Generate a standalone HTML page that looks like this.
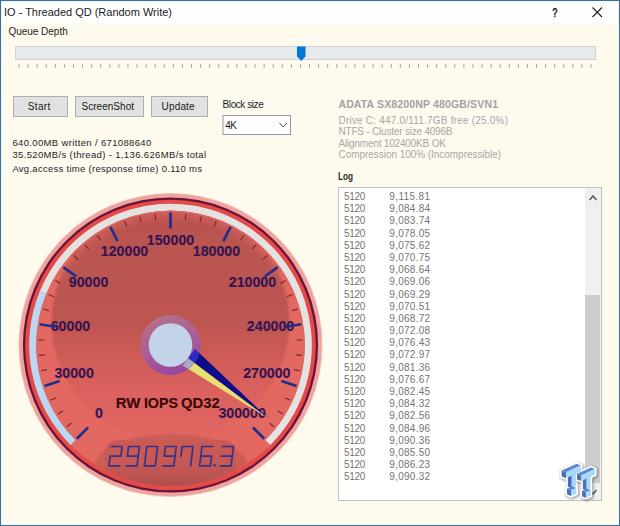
<!DOCTYPE html><html><head><meta charset="utf-8"><style>html,body{margin:0;padding:0;width:620px;height:526px;overflow:hidden;background:#fefaee}svg{display:block}text{font-family:"Liberation Sans",sans-serif}</style></head><body>
<svg width="620" height="526" viewBox="0 0 620 526">
<defs><linearGradient id="hubring" x1="0.3" y1="0" x2="0.6" y2="1"><stop offset="0" stop-color="#b4728a"/><stop offset="0.5" stop-color="#a660a0"/><stop offset="1" stop-color="#9044a8"/></linearGradient><linearGradient id="disp" x1="0" y1="0" x2="0" y2="1"><stop offset="0" stop-color="#c95a55"/><stop offset="0.5" stop-color="#c65954"/><stop offset="0.8" stop-color="#bb5451"/><stop offset="1" stop-color="#b04e4c"/></linearGradient><linearGradient id="darkgrad" x1="0" y1="0" x2="0" y2="1"><stop offset="0" stop-color="#b95350"/><stop offset="0.5" stop-color="#bd5651"/><stop offset="0.62" stop-color="#cc5a56"/><stop offset="0.8" stop-color="#db625e"/><stop offset="1" stop-color="#e36662"/></linearGradient><radialGradient id="bezelglow" cx="170.5" cy="345" r="134.2" gradientUnits="userSpaceOnUse"><stop offset="0.92" stop-color="#e36862" stop-opacity="0"/><stop offset="1" stop-color="#e36862" stop-opacity="0.55"/></radialGradient><filter id="blur1" x="-10%" y="-10%" width="120%" height="120%"><feGaussianBlur stdDeviation="0.5"/></filter><filter id="blur1b" x="-10%" y="-10%" width="120%" height="120%"><feGaussianBlur stdDeviation="1.2"/></filter><filter id="blur2" x="-10%" y="-10%" width="120%" height="120%"><feGaussianBlur stdDeviation="2"/></filter><filter id="blur3" x="-20%" y="-20%" width="140%" height="140%"><feGaussianBlur stdDeviation="3"/></filter><filter id="blurlogo" x="-30%" y="-30%" width="160%" height="160%"><feGaussianBlur stdDeviation="14"/></filter><clipPath id="dialclip2"><circle cx="170.5" cy="345.0" r="141.3"/></clipPath><clipPath id="dialclip"><circle cx="170.5" cy="345.0" r="134.2"/></clipPath></defs>
<rect x="0" y="0" width="620" height="526" fill="#fefaee"/>
<rect x="0" y="0" width="620" height="23" fill="#ffffff"/>
<rect x="1.5" y="1.5" width="617" height="523" fill="none" stroke="#eafbfd" stroke-width="1"/>
<rect x="0.5" y="0.5" width="619" height="525" fill="none" stroke="#3b6d9a" stroke-width="1"/>
<text x="4" y="16" font-size="11" fill="#1b1b1b" textLength="168" lengthAdjust="spacing">IO - Threaded QD (Random Write)</text>
<text x="552.6" y="17" font-size="12" fill="#1e1e1e" stroke="#1e1e1e" stroke-width="0.6" textLength="4.8" lengthAdjust="spacingAndGlyphs">?</text>
<path d="M592.5,7.5 L602,17 M602,7.5 L592.5,17" stroke="#222" stroke-width="1.1"/>
<text x="8.4" y="35.2" font-size="10" fill="#1e1e1e" textLength="59.3" lengthAdjust="spacing">Queue Depth</text>
<rect x="15.5" y="46.5" width="580" height="13" fill="#e7eaea" stroke="#d3d3d3" stroke-width="1"/>
<rect x="18.50" y="64.2" width="1" height="3.4" fill="#9c9c9c"/>
<rect x="27.58" y="64.2" width="1" height="3.4" fill="#9c9c9c"/>
<rect x="36.66" y="64.2" width="1" height="3.4" fill="#9c9c9c"/>
<rect x="45.74" y="64.2" width="1" height="3.4" fill="#9c9c9c"/>
<rect x="54.82" y="64.2" width="1" height="3.4" fill="#9c9c9c"/>
<rect x="63.90" y="64.2" width="1" height="3.4" fill="#9c9c9c"/>
<rect x="72.98" y="64.2" width="1" height="3.4" fill="#9c9c9c"/>
<rect x="82.06" y="64.2" width="1" height="3.4" fill="#9c9c9c"/>
<rect x="91.13" y="64.2" width="1" height="3.4" fill="#9c9c9c"/>
<rect x="100.21" y="64.2" width="1" height="3.4" fill="#9c9c9c"/>
<rect x="109.29" y="64.2" width="1" height="3.4" fill="#9c9c9c"/>
<rect x="118.37" y="64.2" width="1" height="3.4" fill="#9c9c9c"/>
<rect x="127.45" y="64.2" width="1" height="3.4" fill="#9c9c9c"/>
<rect x="136.53" y="64.2" width="1" height="3.4" fill="#9c9c9c"/>
<rect x="145.61" y="64.2" width="1" height="3.4" fill="#9c9c9c"/>
<rect x="154.69" y="64.2" width="1" height="3.4" fill="#9c9c9c"/>
<rect x="163.77" y="64.2" width="1" height="3.4" fill="#9c9c9c"/>
<rect x="172.85" y="64.2" width="1" height="3.4" fill="#9c9c9c"/>
<rect x="181.93" y="64.2" width="1" height="3.4" fill="#9c9c9c"/>
<rect x="191.01" y="64.2" width="1" height="3.4" fill="#9c9c9c"/>
<rect x="200.09" y="64.2" width="1" height="3.4" fill="#9c9c9c"/>
<rect x="209.17" y="64.2" width="1" height="3.4" fill="#9c9c9c"/>
<rect x="218.25" y="64.2" width="1" height="3.4" fill="#9c9c9c"/>
<rect x="227.33" y="64.2" width="1" height="3.4" fill="#9c9c9c"/>
<rect x="236.40" y="64.2" width="1" height="3.4" fill="#9c9c9c"/>
<rect x="245.48" y="64.2" width="1" height="3.4" fill="#9c9c9c"/>
<rect x="254.56" y="64.2" width="1" height="3.4" fill="#9c9c9c"/>
<rect x="263.64" y="64.2" width="1" height="3.4" fill="#9c9c9c"/>
<rect x="272.72" y="64.2" width="1" height="3.4" fill="#9c9c9c"/>
<rect x="281.80" y="64.2" width="1" height="3.4" fill="#9c9c9c"/>
<rect x="290.88" y="64.2" width="1" height="3.4" fill="#9c9c9c"/>
<rect x="299.96" y="64.2" width="1" height="3.4" fill="#9c9c9c"/>
<rect x="309.04" y="64.2" width="1" height="3.4" fill="#9c9c9c"/>
<rect x="318.12" y="64.2" width="1" height="3.4" fill="#9c9c9c"/>
<rect x="327.20" y="64.2" width="1" height="3.4" fill="#9c9c9c"/>
<rect x="336.28" y="64.2" width="1" height="3.4" fill="#9c9c9c"/>
<rect x="345.36" y="64.2" width="1" height="3.4" fill="#9c9c9c"/>
<rect x="354.44" y="64.2" width="1" height="3.4" fill="#9c9c9c"/>
<rect x="363.52" y="64.2" width="1" height="3.4" fill="#9c9c9c"/>
<rect x="372.60" y="64.2" width="1" height="3.4" fill="#9c9c9c"/>
<rect x="381.67" y="64.2" width="1" height="3.4" fill="#9c9c9c"/>
<rect x="390.75" y="64.2" width="1" height="3.4" fill="#9c9c9c"/>
<rect x="399.83" y="64.2" width="1" height="3.4" fill="#9c9c9c"/>
<rect x="408.91" y="64.2" width="1" height="3.4" fill="#9c9c9c"/>
<rect x="417.99" y="64.2" width="1" height="3.4" fill="#9c9c9c"/>
<rect x="427.07" y="64.2" width="1" height="3.4" fill="#9c9c9c"/>
<rect x="436.15" y="64.2" width="1" height="3.4" fill="#9c9c9c"/>
<rect x="445.23" y="64.2" width="1" height="3.4" fill="#9c9c9c"/>
<rect x="454.31" y="64.2" width="1" height="3.4" fill="#9c9c9c"/>
<rect x="463.39" y="64.2" width="1" height="3.4" fill="#9c9c9c"/>
<rect x="472.47" y="64.2" width="1" height="3.4" fill="#9c9c9c"/>
<rect x="481.55" y="64.2" width="1" height="3.4" fill="#9c9c9c"/>
<rect x="490.63" y="64.2" width="1" height="3.4" fill="#9c9c9c"/>
<rect x="499.71" y="64.2" width="1" height="3.4" fill="#9c9c9c"/>
<rect x="508.79" y="64.2" width="1" height="3.4" fill="#9c9c9c"/>
<rect x="517.87" y="64.2" width="1" height="3.4" fill="#9c9c9c"/>
<rect x="526.94" y="64.2" width="1" height="3.4" fill="#9c9c9c"/>
<rect x="536.02" y="64.2" width="1" height="3.4" fill="#9c9c9c"/>
<rect x="545.10" y="64.2" width="1" height="3.4" fill="#9c9c9c"/>
<rect x="554.18" y="64.2" width="1" height="3.4" fill="#9c9c9c"/>
<rect x="563.26" y="64.2" width="1" height="3.4" fill="#9c9c9c"/>
<rect x="572.34" y="64.2" width="1" height="3.4" fill="#9c9c9c"/>
<rect x="581.42" y="64.2" width="1" height="3.4" fill="#9c9c9c"/>
<rect x="590.50" y="64.2" width="1" height="3.4" fill="#9c9c9c"/>
<path d="M297,46.5 H305.5 V56.5 L301.25,61 L297,56.5 Z" fill="#0078d7"/>
<rect x="13.5" y="96.5" width="54" height="20" fill="#e1e1e1" stroke="#adadad" stroke-width="1"/>
<text x="27.7" y="109.7" font-size="10" fill="#1a1a1a" textLength="22.6" lengthAdjust="spacing">Start</text>
<rect x="75.5" y="96.5" width="68" height="20" fill="#e1e1e1" stroke="#adadad" stroke-width="1"/>
<text x="81.5" y="109.7" font-size="10" fill="#1a1a1a" textLength="52.5" lengthAdjust="spacing">ScreenShot</text>
<rect x="151.5" y="96.5" width="56" height="20" fill="#e1e1e1" stroke="#adadad" stroke-width="1"/>
<text x="161.6" y="109.7" font-size="10" fill="#1a1a1a" textLength="33" lengthAdjust="spacing">Update</text>
<text x="222.6" y="107.6" font-size="10" fill="#1e1e1e" textLength="41.1" lengthAdjust="spacing">Block size</text>
<rect x="223" y="115.5" width="67.5" height="19" fill="#ffffff" stroke="#999999" stroke-width="1"/>
<text x="225.3" y="129" font-size="10" fill="#1a1a1a" textLength="11.7" lengthAdjust="spacing">4K</text>
<path d="M279.5,123 L283.25,127 L287,123" fill="none" stroke="#444" stroke-width="1"/>
<text x="12.4" y="146.4" font-size="9.5" fill="#1e1e1e" textLength="138.9" lengthAdjust="spacing">640.00MB written / 671088640</text>
<text x="12.4" y="158" font-size="9.5" fill="#1e1e1e" textLength="193.7" lengthAdjust="spacing">35.520MB/s (thread) - 1,136.626MB/s total</text>
<text x="12.4" y="172.2" font-size="9.5" fill="#1e1e1e" textLength="189.6" lengthAdjust="spacing">Avg.access time (response time) 0.110 ms</text>
<text x="338.4" y="107.8" font-size="10.5" font-weight="bold" fill="#a3a3a3" textLength="159.6" lengthAdjust="spacing">ADATA SX8200NP 480GB/SVN1</text>
<text x="338.5" y="123.6" font-size="10" fill="#a8a8a8" textLength="169.5" lengthAdjust="spacing">Drive C: 447.0/111.7GB free (25.0%)</text>
<text x="338.5" y="135" font-size="10" fill="#a8a8a8" textLength="114" lengthAdjust="spacing">NTFS - Cluster size 4096B</text>
<text x="338.5" y="146.5" font-size="10" fill="#a8a8a8" textLength="107.4" lengthAdjust="spacing">Alignment 102400KB OK</text>
<text x="338.5" y="158.3" font-size="10" fill="#a8a8a8" textLength="162.6" lengthAdjust="spacing">Compression 100% (Incompressible)</text>
<text x="338" y="179.9" font-size="10.5" font-weight="bold" fill="#2a2a2a" textLength="15.1" lengthAdjust="spacingAndGlyphs">Log</text>
<rect x="338.5" y="187.5" width="263" height="313" fill="#ffffff" stroke="#c2c2c2" stroke-width="1"/>
<rect x="585" y="188" width="16" height="312" fill="#f0f0f0"/>
<rect x="585" y="295" width="15" height="188" fill="#cdcdcd"/>
<path d="M589.5,200 L593,196 L596.5,200" fill="none" stroke="#555" stroke-width="1.5"/>
<path d="M589.5,490 L593,494 L596.5,490" fill="none" stroke="#555" stroke-width="1.5"/>
<text x="344.1" y="200.00" font-size="10" fill="#747474" textLength="21.3" lengthAdjust="spacing">5120</text>
<text x="389.3" y="200.00" font-size="10" fill="#747474" textLength="40.8" lengthAdjust="spacing">9,115.81</text>
<text x="344.1" y="212.19" font-size="10" fill="#747474" textLength="21.3" lengthAdjust="spacing">5120</text>
<text x="389.3" y="212.19" font-size="10" fill="#747474" textLength="40.8" lengthAdjust="spacing">9,084.84</text>
<text x="344.1" y="224.38" font-size="10" fill="#747474" textLength="21.3" lengthAdjust="spacing">5120</text>
<text x="389.3" y="224.38" font-size="10" fill="#747474" textLength="40.8" lengthAdjust="spacing">9,083.74</text>
<text x="344.1" y="236.57" font-size="10" fill="#747474" textLength="21.3" lengthAdjust="spacing">5120</text>
<text x="389.3" y="236.57" font-size="10" fill="#747474" textLength="40.8" lengthAdjust="spacing">9,078.05</text>
<text x="344.1" y="248.77" font-size="10" fill="#747474" textLength="21.3" lengthAdjust="spacing">5120</text>
<text x="389.3" y="248.77" font-size="10" fill="#747474" textLength="40.8" lengthAdjust="spacing">9,075.62</text>
<text x="344.1" y="260.96" font-size="10" fill="#747474" textLength="21.3" lengthAdjust="spacing">5120</text>
<text x="389.3" y="260.96" font-size="10" fill="#747474" textLength="40.8" lengthAdjust="spacing">9,070.75</text>
<text x="344.1" y="273.15" font-size="10" fill="#747474" textLength="21.3" lengthAdjust="spacing">5120</text>
<text x="389.3" y="273.15" font-size="10" fill="#747474" textLength="40.8" lengthAdjust="spacing">9,068.64</text>
<text x="344.1" y="285.34" font-size="10" fill="#747474" textLength="21.3" lengthAdjust="spacing">5120</text>
<text x="389.3" y="285.34" font-size="10" fill="#747474" textLength="40.8" lengthAdjust="spacing">9,069.06</text>
<text x="344.1" y="297.53" font-size="10" fill="#747474" textLength="21.3" lengthAdjust="spacing">5120</text>
<text x="389.3" y="297.53" font-size="10" fill="#747474" textLength="40.8" lengthAdjust="spacing">9,069.29</text>
<text x="344.1" y="309.72" font-size="10" fill="#747474" textLength="21.3" lengthAdjust="spacing">5120</text>
<text x="389.3" y="309.72" font-size="10" fill="#747474" textLength="40.8" lengthAdjust="spacing">9,070.51</text>
<text x="344.1" y="321.91" font-size="10" fill="#747474" textLength="21.3" lengthAdjust="spacing">5120</text>
<text x="389.3" y="321.91" font-size="10" fill="#747474" textLength="40.8" lengthAdjust="spacing">9,068.72</text>
<text x="344.1" y="334.10" font-size="10" fill="#747474" textLength="21.3" lengthAdjust="spacing">5120</text>
<text x="389.3" y="334.10" font-size="10" fill="#747474" textLength="40.8" lengthAdjust="spacing">9,072.08</text>
<text x="344.1" y="346.30" font-size="10" fill="#747474" textLength="21.3" lengthAdjust="spacing">5120</text>
<text x="389.3" y="346.30" font-size="10" fill="#747474" textLength="40.8" lengthAdjust="spacing">9,076.43</text>
<text x="344.1" y="358.49" font-size="10" fill="#747474" textLength="21.3" lengthAdjust="spacing">5120</text>
<text x="389.3" y="358.49" font-size="10" fill="#747474" textLength="40.8" lengthAdjust="spacing">9,072.97</text>
<text x="344.1" y="370.68" font-size="10" fill="#747474" textLength="21.3" lengthAdjust="spacing">5120</text>
<text x="389.3" y="370.68" font-size="10" fill="#747474" textLength="40.8" lengthAdjust="spacing">9,081.36</text>
<text x="344.1" y="382.87" font-size="10" fill="#747474" textLength="21.3" lengthAdjust="spacing">5120</text>
<text x="389.3" y="382.87" font-size="10" fill="#747474" textLength="40.8" lengthAdjust="spacing">9,076.67</text>
<text x="344.1" y="395.06" font-size="10" fill="#747474" textLength="21.3" lengthAdjust="spacing">5120</text>
<text x="389.3" y="395.06" font-size="10" fill="#747474" textLength="40.8" lengthAdjust="spacing">9,082.45</text>
<text x="344.1" y="407.25" font-size="10" fill="#747474" textLength="21.3" lengthAdjust="spacing">5120</text>
<text x="389.3" y="407.25" font-size="10" fill="#747474" textLength="40.8" lengthAdjust="spacing">9,084.32</text>
<text x="344.1" y="419.44" font-size="10" fill="#747474" textLength="21.3" lengthAdjust="spacing">5120</text>
<text x="389.3" y="419.44" font-size="10" fill="#747474" textLength="40.8" lengthAdjust="spacing">9,082.56</text>
<text x="344.1" y="431.63" font-size="10" fill="#747474" textLength="21.3" lengthAdjust="spacing">5120</text>
<text x="389.3" y="431.63" font-size="10" fill="#747474" textLength="40.8" lengthAdjust="spacing">9,084.96</text>
<text x="344.1" y="443.83" font-size="10" fill="#747474" textLength="21.3" lengthAdjust="spacing">5120</text>
<text x="389.3" y="443.83" font-size="10" fill="#747474" textLength="40.8" lengthAdjust="spacing">9,090.36</text>
<text x="344.1" y="456.02" font-size="10" fill="#747474" textLength="21.3" lengthAdjust="spacing">5120</text>
<text x="389.3" y="456.02" font-size="10" fill="#747474" textLength="40.8" lengthAdjust="spacing">9,085.50</text>
<text x="344.1" y="468.21" font-size="10" fill="#747474" textLength="21.3" lengthAdjust="spacing">5120</text>
<text x="389.3" y="468.21" font-size="10" fill="#747474" textLength="40.8" lengthAdjust="spacing">9,086.23</text>
<text x="344.1" y="480.40" font-size="10" fill="#747474" textLength="21.3" lengthAdjust="spacing">5120</text>
<text x="389.3" y="480.40" font-size="10" fill="#747474" textLength="40.8" lengthAdjust="spacing">9,090.32</text>
<g id="gauge">
<circle cx="170.5" cy="345.0" r="152" fill="#f3c2ba"/>
<circle cx="170.5" cy="345.0" r="151.2" fill="#eea49e"/>
<circle cx="170.5" cy="345.0" r="147.6" fill="#6a1238"/>
<circle cx="170.5" cy="345.0" r="145.3" fill="#e34a48"/>
<circle cx="170.5" cy="345.0" r="141.3" fill="#e36862"/>
<path d="M70.59,444.91 A141.3,141.3 0 0 1 39.96,290.93 L46.52,293.64 A134.2,134.2 0 0 0 75.61,439.89 Z" fill="#bcd7f2"/>
<path d="M39.96,290.93 A141.3,141.3 0 1 1 270.41,444.91 L265.39,439.89 A134.2,134.2 0 1 0 46.52,293.64 Z" fill="#e5e2e2"/>
<g clip-path="url(#dialclip)">
<circle cx="170.5" cy="322" r="119" fill="url(#darkgrad)" filter="url(#blur1b)"/>
</g>
<circle cx="170.5" cy="345.0" r="134.2" fill="url(#bezelglow)"/>
<path d="M75.46,440.04 A134.4,134.4 0 1 1 265.54,440.04 L264.69,439.19 A133.2,133.2 0 1 0 76.31,439.19 Z" fill="#de6a65"/>
<text x="94.92" y="418.18" font-size="15.5" font-weight="bold" fill="#341452" stroke="#341452" stroke-width="0.15" textLength="7.90" lengthAdjust="spacingAndGlyphs">0</text>
<text x="54.41" y="377.85" font-size="15.5" font-weight="bold" fill="#341452" stroke="#341452" stroke-width="0.15" textLength="39.50" lengthAdjust="spacingAndGlyphs">30000</text>
<text x="50.70" y="330.70" font-size="15.5" font-weight="bold" fill="#341452" stroke="#341452" stroke-width="0.15" textLength="39.50" lengthAdjust="spacingAndGlyphs">60000</text>
<text x="68.80" y="287.01" font-size="15.5" font-weight="bold" fill="#341452" stroke="#341452" stroke-width="0.15" textLength="39.50" lengthAdjust="spacingAndGlyphs">90000</text>
<text x="100.81" y="256.29" font-size="15.5" font-weight="bold" fill="#341452" stroke="#341452" stroke-width="0.15" textLength="47.40" lengthAdjust="spacingAndGlyphs">120000</text>
<text x="146.80" y="245.25" font-size="15.5" font-weight="bold" fill="#341452" stroke="#341452" stroke-width="0.15" textLength="47.40" lengthAdjust="spacingAndGlyphs">150000</text>
<text x="192.79" y="256.29" font-size="15.5" font-weight="bold" fill="#341452" stroke="#341452" stroke-width="0.15" textLength="47.40" lengthAdjust="spacingAndGlyphs">180000</text>
<text x="228.75" y="287.01" font-size="15.5" font-weight="bold" fill="#341452" stroke="#341452" stroke-width="0.15" textLength="47.40" lengthAdjust="spacingAndGlyphs">210000</text>
<text x="246.85" y="330.70" font-size="15.5" font-weight="bold" fill="#341452" stroke="#341452" stroke-width="0.15" textLength="47.40" lengthAdjust="spacingAndGlyphs">240000</text>
<text x="243.14" y="377.85" font-size="15.5" font-weight="bold" fill="#341452" stroke="#341452" stroke-width="0.15" textLength="47.40" lengthAdjust="spacingAndGlyphs">270000</text>
<text x="218.43" y="418.18" font-size="15.5" font-weight="bold" fill="#341452" stroke="#341452" stroke-width="0.15" textLength="47.40" lengthAdjust="spacingAndGlyphs">300000</text>
<line x1="88.12" y1="427.38" x2="76.81" y2="438.69" stroke="#1e2f8e" stroke-width="2.7"/>
<line x1="71.55" y1="423.01" x2="66.84" y2="426.72" stroke="#762828" stroke-width="1.15"/>
<line x1="63.07" y1="410.83" x2="57.95" y2="413.97" stroke="#762828" stroke-width="1.15"/>
<line x1="56.07" y1="397.75" x2="50.63" y2="400.26" stroke="#762828" stroke-width="1.15"/>
<line x1="59.70" y1="381.00" x2="44.49" y2="385.94" stroke="#1e2f8e" stroke-width="2.7"/>
<line x1="46.92" y1="369.58" x2="41.04" y2="370.75" stroke="#762828" stroke-width="1.15"/>
<line x1="44.89" y1="354.89" x2="38.91" y2="355.36" stroke="#762828" stroke-width="1.15"/>
<line x1="44.60" y1="340.05" x2="38.60" y2="339.82" stroke="#762828" stroke-width="1.15"/>
<line x1="55.43" y1="326.78" x2="39.63" y2="324.27" stroke="#1e2f8e" stroke-width="2.7"/>
<line x1="49.23" y1="310.80" x2="43.46" y2="309.17" stroke="#762828" stroke-width="1.15"/>
<line x1="54.09" y1="296.78" x2="48.55" y2="294.49" stroke="#762828" stroke-width="1.15"/>
<line x1="60.57" y1="283.43" x2="55.33" y2="280.50" stroke="#762828" stroke-width="1.15"/>
<line x1="76.25" y1="276.52" x2="63.31" y2="267.12" stroke="#1e2f8e" stroke-width="2.7"/>
<line x1="77.98" y1="259.47" x2="73.57" y2="255.40" stroke="#762828" stroke-width="1.15"/>
<line x1="88.67" y1="249.19" x2="84.77" y2="244.63" stroke="#762828" stroke-width="1.15"/>
<line x1="100.50" y1="240.23" x2="97.16" y2="235.25" stroke="#762828" stroke-width="1.15"/>
<line x1="117.61" y1="241.20" x2="110.35" y2="226.94" stroke="#1e2f8e" stroke-width="2.7"/>
<line x1="126.89" y1="226.79" x2="124.81" y2="221.16" stroke="#762828" stroke-width="1.15"/>
<line x1="141.09" y1="222.48" x2="139.69" y2="216.65" stroke="#762828" stroke-width="1.15"/>
<line x1="155.69" y1="219.87" x2="154.99" y2="213.91" stroke="#762828" stroke-width="1.15"/>
<line x1="170.50" y1="228.50" x2="170.50" y2="212.50" stroke="#1e2f8e" stroke-width="2.7"/>
<line x1="185.31" y1="219.87" x2="186.01" y2="213.91" stroke="#762828" stroke-width="1.15"/>
<line x1="199.91" y1="222.48" x2="201.31" y2="216.65" stroke="#762828" stroke-width="1.15"/>
<line x1="214.11" y1="226.79" x2="216.19" y2="221.16" stroke="#762828" stroke-width="1.15"/>
<line x1="223.39" y1="241.20" x2="230.65" y2="226.94" stroke="#1e2f8e" stroke-width="2.7"/>
<line x1="240.50" y1="240.23" x2="243.84" y2="235.25" stroke="#762828" stroke-width="1.15"/>
<line x1="252.33" y1="249.19" x2="256.23" y2="244.63" stroke="#762828" stroke-width="1.15"/>
<line x1="263.02" y1="259.47" x2="267.43" y2="255.40" stroke="#762828" stroke-width="1.15"/>
<line x1="264.75" y1="276.52" x2="277.69" y2="267.12" stroke="#1e2f8e" stroke-width="2.7"/>
<line x1="280.43" y1="283.43" x2="285.67" y2="280.50" stroke="#762828" stroke-width="1.15"/>
<line x1="286.91" y1="296.78" x2="292.45" y2="294.49" stroke="#762828" stroke-width="1.15"/>
<line x1="291.77" y1="310.80" x2="297.54" y2="309.17" stroke="#762828" stroke-width="1.15"/>
<line x1="285.57" y1="326.78" x2="301.37" y2="324.27" stroke="#1e2f8e" stroke-width="2.7"/>
<line x1="296.40" y1="340.05" x2="302.40" y2="339.82" stroke="#762828" stroke-width="1.15"/>
<line x1="296.11" y1="354.89" x2="302.09" y2="355.36" stroke="#762828" stroke-width="1.15"/>
<line x1="294.08" y1="369.58" x2="299.96" y2="370.75" stroke="#762828" stroke-width="1.15"/>
<line x1="281.30" y1="381.00" x2="296.51" y2="385.94" stroke="#1e2f8e" stroke-width="2.7"/>
<line x1="284.93" y1="397.75" x2="290.37" y2="400.26" stroke="#762828" stroke-width="1.15"/>
<line x1="277.93" y1="410.83" x2="283.05" y2="413.97" stroke="#762828" stroke-width="1.15"/>
<line x1="269.45" y1="423.01" x2="274.16" y2="426.72" stroke="#762828" stroke-width="1.15"/>
<line x1="252.88" y1="427.38" x2="264.19" y2="438.69" stroke="#1e2f8e" stroke-width="2.7"/>
<g font-size="14" font-weight="bold" fill="#3a0707" stroke="#3a0707" stroke-width="0.12"><text x="115.8" y="407.6" textLength="24.6" lengthAdjust="spacingAndGlyphs">RW</text><text x="143.9" y="407.6" textLength="34.2" lengthAdjust="spacingAndGlyphs">IOPS</text><text x="181.0" y="407.6" textLength="38.6" lengthAdjust="spacingAndGlyphs">QD32</text></g>
<g clip-path="url(#dialclip2)"><ellipse cx="171" cy="467" rx="76.5" ry="33" fill="#cc5b56" filter="url(#blur1b)"/><rect x="105" y="440" width="131" height="46" rx="13" ry="13" fill="url(#disp)" filter="url(#blur1)"/></g>
<g transform="translate(111.3,446.5) skewX(-7)"><path d="M0.0,0.0L10.8,0.0M10.8,0.0L10.8,9.7M0.0,9.7L10.8,9.7M0.0,9.7L0.0,19.3M0.0,19.3L10.8,19.3" stroke="#33338a" stroke-width="1.7" stroke-linecap="round" stroke-linejoin="round" fill="none"/></g>
<g transform="translate(128.6,446.5) skewX(-7)"><path d="M0.0,0.0L10.8,0.0M10.8,0.0L10.8,9.7M10.8,9.7L10.8,19.3M0.0,19.3L10.8,19.3M0.0,0.0L0.0,9.7M0.0,9.7L10.8,9.7" stroke="#33338a" stroke-width="1.7" stroke-linecap="round" stroke-linejoin="round" fill="none"/></g>
<g transform="translate(146.8,446.5) skewX(-7)"><path d="M0.0,0.0L10.8,0.0M10.8,0.0L10.8,9.7M10.8,9.7L10.8,19.3M0.0,19.3L10.8,19.3M0.0,9.7L0.0,19.3M0.0,0.0L0.0,9.7" stroke="#33338a" stroke-width="1.7" stroke-linecap="round" stroke-linejoin="round" fill="none"/></g>
<g transform="translate(165.4,446.5) skewX(-7)"><path d="M0.0,0.0L10.8,0.0M10.8,0.0L10.8,9.7M10.8,9.7L10.8,19.3M0.0,19.3L10.8,19.3M0.0,0.0L0.0,9.7M0.0,9.7L10.8,9.7" stroke="#33338a" stroke-width="1.7" stroke-linecap="round" stroke-linejoin="round" fill="none"/></g>
<g transform="translate(182.2,446.5) skewX(-7)"><path d="M0.0,0.0L10.8,0.0M10.8,0.0L10.8,9.7M10.8,9.7L10.8,19.3M0.0,0.0L0.0,9.7" stroke="#33338a" stroke-width="1.7" stroke-linecap="round" stroke-linejoin="round" fill="none"/></g>
<g transform="translate(202.0,446.5) skewX(-7)"><path d="M0.0,0.0L10.8,0.0M0.0,0.0L0.0,9.7M0.0,9.7L10.8,9.7M0.0,9.7L0.0,19.3M0.0,19.3L10.8,19.3M10.8,9.7L10.8,19.3" stroke="#33338a" stroke-width="1.7" stroke-linecap="round" stroke-linejoin="round" fill="none"/></g>
<circle cx="214.6" cy="465.3" r="1.2" fill="#33338a"/>
<g transform="translate(222.7,446.5) skewX(-7)"><path d="M0.0,0.0L10.8,0.0M10.8,0.0L10.8,9.7M0.0,9.7L10.8,9.7M10.8,9.7L10.8,19.3M0.0,19.3L10.8,19.3" stroke="#33338a" stroke-width="1.7" stroke-linecap="round" stroke-linejoin="round" fill="none"/></g>
<path d="M195.00,349.00 L188.10,358.20 L268.89,418.82 Z" fill="#0d0d8a"/>
<path d="M182.70,365.40 L188.10,358.20 L268.89,418.82 Z" fill="#e6df72"/>
<circle cx="170.5" cy="345.0" r="30" fill="url(#hubring)" opacity="0.9"/>
<clipPath id="ringclip"><circle cx="170.5" cy="345.0" r="30"/></clipPath>
<g clip-path="url(#ringclip)">
<path d="M195.00,349.00 L188.10,358.20 L268.89,418.82 Z" fill="#2a2ac4"/>
<path d="M182.70,365.40 L188.10,358.20 L268.89,418.82 Z" fill="#a9a9c6"/>
</g>
<circle cx="170.5" cy="345.0" r="21.8" fill="#c3d3e9"/>
</g>
<g transform="translate(558,460) scale(0.07605)">
<g transform="translate(0,0) scale(1.0)">
<path d="M48,138 L245,48 L300,72 L300,152 L238,180 L238,345 L240,368 L240,445 L172,475 L118,452 L118,375 L130,350 L130,228 L108,238 L48,218 Z" fill="#000" opacity="0.35" stroke="#000" stroke-width="60" stroke-linejoin="round" transform="translate(12,14)" filter="url(#blurlogo)"/>
<path d="M48,138 L245,48 L300,72 L300,152 L238,180 L238,345 L240,368 L240,445 L172,475 L118,452 L118,375 L130,350 L130,228 L108,238 L48,218 Z" fill="#fff" stroke="#fff" stroke-width="44" stroke-linejoin="round"/>
</g>
<g transform="translate(205,52) scale(0.94)">
<path d="M48,138 L245,48 L300,72 L300,152 L238,180 L238,345 L240,368 L240,445 L172,475 L118,452 L118,375 L130,350 L130,228 L108,238 L48,218 Z" fill="#000" opacity="0.35" stroke="#000" stroke-width="60" stroke-linejoin="round" transform="translate(12,14)" filter="url(#blurlogo)"/>
<path d="M48,138 L245,48 L300,72 L300,152 L238,180 L238,345 L240,368 L240,445 L172,475 L118,452 L118,375 L130,350 L130,228 L108,238 L48,218 Z" fill="#fff" stroke="#fff" stroke-width="44" stroke-linejoin="round"/>
</g>
<g transform="translate(0,0) scale(1.0)">
<path d="M48,138 L245,48 L300,72 L108,160 Z" fill="#5c88d4"/>
<path d="M48,138 L108,160 L108,240 L48,218 Z" fill="#4a6fba"/>
<path d="M108,160 L300,72 L300,152 L238,180 L238,345 L180,370 L180,205 L108,238 Z" fill="#a9d9f9"/>
<path d="M130,228 L180,205 L180,370 L130,350 Z" fill="#4a6fba"/>
<path d="M118,375 L185,345 L240,368 L172,398 Z" fill="#5c88d4"/>
<path d="M172,398 L240,368 L240,445 L172,475 Z" fill="#a9d9f9"/>
<path d="M118,375 L172,398 L172,475 L118,452 Z" fill="#4a6fba"/>
</g>
<g transform="translate(205,52) scale(0.94)">
<path d="M48,138 L245,48 L300,72 L108,160 Z" fill="#5c88d4"/>
<path d="M48,138 L108,160 L108,240 L48,218 Z" fill="#4a6fba"/>
<path d="M108,160 L300,72 L300,152 L238,180 L238,345 L180,370 L180,205 L108,238 Z" fill="#a9d9f9"/>
<path d="M130,228 L180,205 L180,370 L130,350 Z" fill="#4a6fba"/>
<path d="M118,375 L185,345 L240,368 L172,398 Z" fill="#5c88d4"/>
<path d="M172,398 L240,368 L240,445 L172,475 Z" fill="#a9d9f9"/>
<path d="M118,375 L172,398 L172,475 L118,452 Z" fill="#4a6fba"/>
</g>
</g>
</svg></body></html>
